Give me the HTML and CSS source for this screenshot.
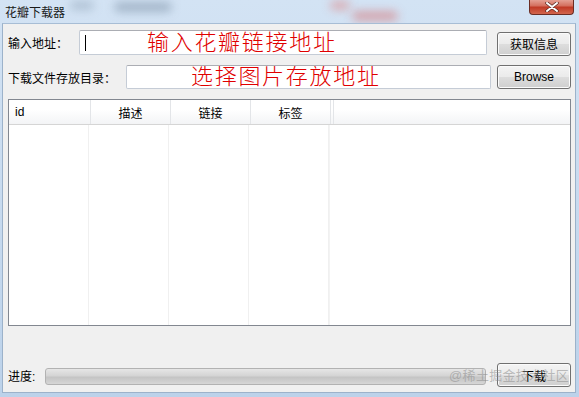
FILE: index.html
```html
<!DOCTYPE html>
<html lang="zh">
<head>
<meta charset="utf-8">
<title>花瓣下载器</title>
<link rel="stylesheet" href="styles.css">
</head>
<body>

<div class="window">
<!-- 标题栏 -->
<div class="titlebar">
<span class="blur blur-a"></span>
<span class="blur blur-b"></span>
<span class="blur blur-c"></span>
<span class="blur blur-d"></span>
<span class="title">花瓣下载器</span>
<button class="close-btn">
<svg width="14" height="10" viewBox="0 0 14 10">
<path d="M2 1 L12 9 M12 1 L2 9" stroke="#5a2a24" stroke-width="3.4" stroke-linecap="round"/>
<path d="M2 1 L12 9 M12 1 L2 9" stroke="#fff" stroke-width="2" stroke-linecap="round"/>
</svg>
</button>
</div>

<div class="client">
<!-- 输入地址 -->
<div class="row row-url">
<label class="label">输入地址：</label>
<div class="textbox">
<span class="caret"></span>
<span class="hint">输入花瓣链接地址</span>
</div>
<button class="btn">获取信息</button>
</div>

<!-- 存放目录 -->
<div class="row row-dir">
<label class="label">下载文件存放目录：</label>
<div class="textbox">
<span class="hint">选择图片存放地址</span>
</div>
<button class="btn">Browse</button>
</div>

<!-- 列表 -->
<div class="listview">
<div class="list-head">
<div class="col col-id">id</div>
<div class="col">描述</div>
<div class="col">链接</div>
<div class="col">标签</div>
<div class="col col-rest"></div>
</div>
<div class="list-body">
<div class="gcol col-id"></div>
<div class="gcol"></div>
<div class="gcol"></div>
<div class="gcol"></div>
<div class="gcol col-rest"></div>
</div>
</div>

<!-- 进度 -->
<div class="row row-progress">
<label class="label">进度:</label>
<div class="progress"></div>
<button class="btn">下载</button>
</div>

<div class="watermark">@稀土掘金技术社区</div>
</div>
</div>

</body>
</html>
```

FILE: styles.css
```css
* {
margin: 0;
padding: 0;
box-sizing: border-box;
}

body {
width: 579px;
height: 397px;
overflow: hidden;
background: #c6d9ee;
font-family: "Liberation Sans", "Noto Sans CJK SC", sans-serif;
font-size: 12px;
color: #000;
}

.window {
width: 579px;
height: 397px;
display: flex;
flex-direction: column;
background: linear-gradient(180deg, #d3e3f4, #bcd2ea);
padding: 0 3px 4px 2px;
}

/* 标题栏 */
.titlebar {
position: relative;
height: 23px;
flex: none;
overflow: hidden;
}

.title {
position: relative;
display: block;
padding: 3px 0 0 3px;
font-size: 12px;
color: #1a1a1a;
}

.blur {
position: absolute;
border-radius: 8px;
filter: blur(5px);
opacity: 0.8;
}
.blur-a { left: 68px; top: 1px; width: 24px; height: 9px; background: #a7b9cc; }
.blur-b { left: 112px; top: 2px; width: 58px; height: 10px; background: #97aabe; }
.blur-c { left: 328px; top: 1px; width: 20px; height: 9px; background: #dba0a4; }
.blur-d { left: 350px; top: 11px; width: 46px; height: 10px; background: #d4959b; }

.close-btn {
position: absolute;
right: 2px;
top: -1px;
width: 45px;
height: 16px;
border: 1px solid #6b2d24;
border-top: none;
border-radius: 0 0 4px 4px;
background: linear-gradient(180deg, #e7a89c 0%, #d4705f 45%, #c03a26 55%, #d2664e 100%);
display: flex;
align-items: center;
justify-content: center;
}

/* 客户区 */
.client {
position: relative;
flex: 1;
background: #f0f0f0;
border: 1px solid #9cb2ca;
border-top-color: #a7bdd5;
padding: 6px 4px 4px 5px;
display: flex;
flex-direction: column;
}

.row {
display: flex;
align-items: center;
}

.label {
flex: none;
}

.textbox {
position: relative;
flex: 1;
background: #fff;
border: 1px solid #c5ccd6;
border-top-color: #abadb3;
border-radius: 2px;
display: flex;
align-items: center;
overflow: hidden;
}

.hint {
color: #e00000;
font-size: 22px;
font-weight: 300;
letter-spacing: 1.7px;
line-height: 22px;
white-space: nowrap;
}

.caret {
width: 1px;
height: 16px;
background: #000;
}

.btn {
flex: none;
width: 74px;
height: 24px;
border: 1px solid #707070;
border-radius: 3px;
background: linear-gradient(180deg, #f4f4f4 0%, #ebebeb 48%, #dddddd 52%, #cfcfcf 100%);
box-shadow: inset 0 0 0 1px #fbfbfb;
font-family: inherit;
font-size: 12px;
color: #000;
}

.row-url {
height: 25px;
}
.row-url .label { width: 71px; }
.row-url .textbox { height: 25px; margin-right: 10px; padding-left: 5px; }
.row-url .caret { margin-right: 61px; }
.row-url .btn { margin-top: 2px; }

.row-dir {
height: 24px;
margin-top: 10px;
}
.row-dir .label { width: 118px; }
.row-dir .textbox { height: 24px; margin-right: 6px; padding-left: 64px; }

/* 列表 */
.listview {
margin-top: 10px;
height: 227px;
border: 1px solid #828790;
background: #fff;
display: flex;
flex-direction: column;
}

.list-head {
height: 25px;
display: flex;
background: linear-gradient(180deg, #ffffff 0%, #ffffff 40%, #f3f4f6 100%);
border-bottom: 1px solid #d5d5d5;
}

.col {
width: 80px;
border-right: 1px solid #e3e5e8;
display: flex;
align-items: center;
justify-content: center;
font-size: 12px;
}

.col-id {
width: 82px;
justify-content: flex-start;
padding-left: 6px;
}

.col-rest {
width: 3px;
}

.list-body {
flex: 1;
display: flex;
}

.gcol {
width: 80px;
border-right: 1px solid #f0f0f0;
}

.gcol.col-rest {
width: 1px;
border-right: 1px solid #f3f3f3;
}

/* 进度 */
.row-progress {
margin-top: auto;
height: 24px;
margin-bottom: 1px;
}
.row-progress .label { width: 37px; }

.progress {
flex: 1;
height: 17px;
margin-right: 11px;
margin-top: 3px;
border: 1px solid #b2b2b2;
border-radius: 3px;
background: linear-gradient(180deg, #e6e6e6 0%, #d4d4d4 45%, #c4c4c4 55%, #d6d6d6 100%);
}

.watermark {
position: absolute;
right: 6px;
bottom: 8px;
font-size: 13px;
color: rgba(140, 140, 140, 0.55);
letter-spacing: 0.3px;
pointer-events: none;
}
```
